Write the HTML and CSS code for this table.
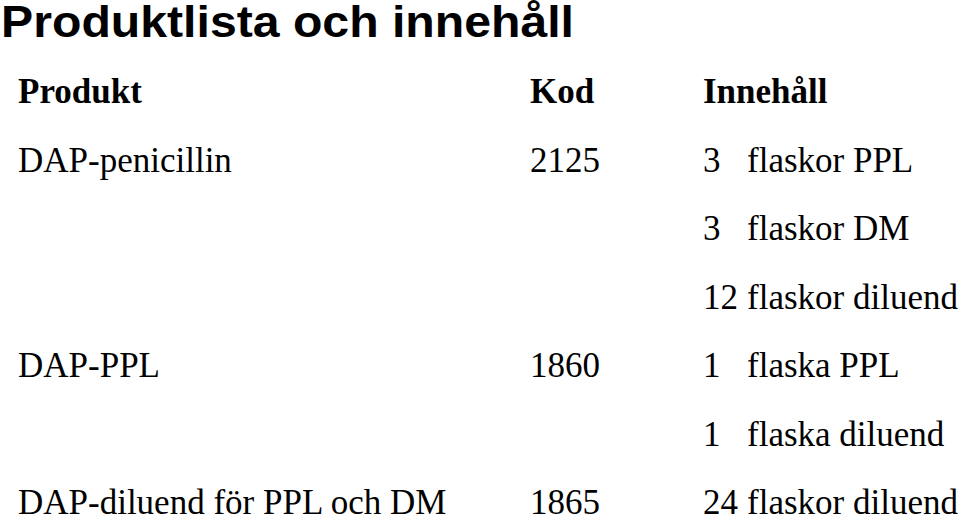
FILE: index.html
```html
<!DOCTYPE html>
<html lang="sv">
<head>
<meta charset="utf-8">
<title>Produktlista och innehåll</title>
<link rel="stylesheet" href="styles.css">
</head>
<body>
<h1 class="title">Produktlista och innehåll</h1>
<div class="table">
  <div class="row head">
    <div class="c-prod">Produkt</div>
    <div class="c-kod">Kod</div>
    <div class="c-inn">Innehåll</div>
  </div>
  <div class="row">
    <div class="c-prod">DAP-penicillin</div>
    <div class="c-kod">2125</div>
    <div class="c-inn">
      <div class="line"><span class="qty">3</span>flaskor PPL</div>
      <div class="line"><span class="qty">3</span>flaskor DM</div>
      <div class="line"><span class="qty">12</span>flaskor diluend</div>
    </div>
  </div>
  <div class="row">
    <div class="c-prod">DAP-PPL</div>
    <div class="c-kod">1860</div>
    <div class="c-inn">
      <div class="line"><span class="qty">1</span>flaska PPL</div>
      <div class="line"><span class="qty">1</span>flaska diluend</div>
    </div>
  </div>
  <div class="row">
    <div class="c-prod">DAP-diluend för PPL och DM</div>
    <div class="c-kod">1865</div>
    <div class="c-inn">
      <div class="line"><span class="qty">24</span>flaskor diluend</div>
    </div>
  </div>
</div>
</body>
</html>
```

FILE: styles.css
```css
html, body {
  margin: 0;
  padding: 0;
  background: #ffffff;
  color: #000000;
}

body {
  width: 960px;
  height: 520px;
  overflow: hidden;
}

.title {
  width: max-content;
  margin: 0;
  padding-left: 1px;
  font-family: "Liberation Sans", Arial, sans-serif;
  font-weight: 700;
  font-size: 44px;
  line-height: 44px;
  white-space: nowrap;
  transform: scaleX(1.095);
  transform-origin: left center;
}

.table {
  width: 942px;
  margin-top: 14px;
  padding-left: 18px;
  font-family: "Liberation Serif", "Times New Roman", serif;
  font-size: 35px;
  line-height: 68.5px;
  white-space: nowrap;
}

.row {
  display: grid;
  grid-template-columns: 512px 173px 1fr;
  align-items: start;
}

.head {
  font-weight: 700;
}

.qty {
  display: inline-block;
  width: 44px;
}
```
